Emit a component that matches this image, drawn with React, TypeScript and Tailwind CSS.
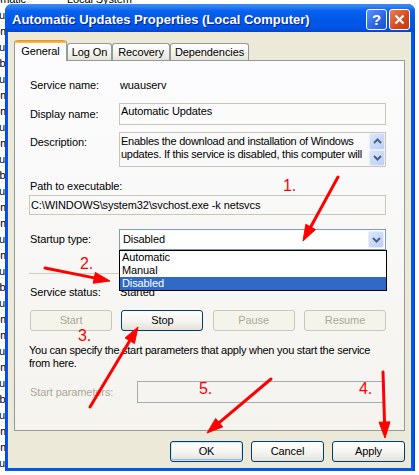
import React from 'react';

// XP "Automatic Updates Properties" dialog, with red annotation arrows drawn over it.

const arrows: [number, number, number, number][] = [
  [338, 177, 303, 241],
  [45, 268, 110, 281],
  [90, 407, 138, 327],
  [383, 372, 385, 438],
  [271, 379, 207, 433],
];

const marks = [
  { t: '1.', x: 283, y: 191 },
  { t: '2.', x: 80, y: 269 },
  { t: '3.', x: 78, y: 341 },
  { t: '4.', x: 359, y: 394 },
  { t: '5.', x: 199, y: 394 },
];

function head(x1: number, y1: number, x2: number, y2: number) {
  const d = Math.hypot(x2 - x1, y2 - y1);
  const ux = (x2 - x1) / d;
  const uy = (y2 - y1) / d;
  const bx = x2 - ux * 16;
  const by = y2 - uy * 16;
  return {
    bx,
    by,
    pts: `${x2},${y2} ${bx - uy * 5.5},${by + ux * 5.5} ${bx + uy * 5.5},${by - ux * 5.5}`,
  };
}

function Chevron({ up = false }: { up?: boolean }) {
  return (
    <svg width="9" height="6" viewBox="0 0 9 6">
      <path
        d={up ? 'M1 5 L4.5 1.5 L8 5' : 'M1 1 L4.5 4.5 L8 1'}
        fill="none"
        stroke="#4D6185"
        strokeWidth="2"
      />
    </svg>
  );
}

function Btn({
  children,
  disabled = false,
  def = false,
  className = '',
}: {
  children: React.ReactNode;
  disabled?: boolean;
  def?: boolean;
  className?: string;
}) {
  const base = 'h-[21px] rounded-[3px] border flex items-center justify-center text-[11px]';
  const look = disabled
    ? 'border-[#C9C7BA] bg-[#F5F4EA] text-[#ACA899]'
    : 'border-[#003C74] bg-[linear-gradient(#ffffff,#f4f4f0_55%,#e3e0d6)] text-black';
  const ring = def ? 'shadow-[inset_0_0_0_1px_#CEE7FF,inset_0_-1px_0_1px_#94B6E8]' : '';
  return <div className={`${base} ${look} ${ring} ${className}`}>{children}</div>;
}

const bgLeft = ['Automatic', 'Manual', 'Automatic', 'Manual', 'Disabled', 'Manual', 'Automatic'];

export default function App() {
  return (
    <div className="relative w-[419px] h-[475px] overflow-hidden bg-white font-['Liberation_Sans',Arial,sans-serif] text-[11px] tracking-[-0.1px] text-black">
      {/* services list behind the dialog */}
      <div className="flex flex-col mt-[-9px]">
        {Array.from({ length: 31 }, (_, i) => (
          <div key={i} className="h-[16px] flex items-center whitespace-nowrap">
            <span className="w-[89px] ml-[-22px] shrink-0">{bgLeft[i % bgLeft.length]}</span>
            <span>Local System</span>
          </div>
        ))}
      </div>

      {/* dialog window */}
      <div className="absolute left-[5px] top-[4px] w-[410px] h-[467px] rounded-t-[7px] bg-[linear-gradient(90deg,#0046D5,#0058EE_2px,#0058EE_calc(100%-2px),#0040C0)] flex flex-col overflow-hidden">
        <div className="h-[28px] shrink-0 flex items-center pl-[7px] pr-[5px] bg-[linear-gradient(#3A8CF6_0%,#2E7EF4_10%,#0762EE_25%,#0058E8_55%,#0055E5_85%,#0047D0_100%)]">
          <span className="pt-[3px] text-[13px] font-bold tracking-normal text-white [text-shadow:1px_1px_#0A1E8C] whitespace-nowrap">
            Automatic Updates Properties (Local Computer)
          </span>
          <div className="ml-auto flex gap-[2px] pt-[3px]">
            <div className="w-[21px] h-[21px] rounded-[3px] border border-white bg-[linear-gradient(135deg,#5C94F8,#2A63E6_60%,#1B4FCF)] flex items-center justify-center text-white font-bold text-[15px] leading-none">
              ?
            </div>
            <div className="w-[21px] h-[21px] rounded-[3px] border border-white bg-[linear-gradient(135deg,#E8805A,#D7471C_60%,#C13A12)] flex items-center justify-center">
              <svg width="11" height="11" viewBox="0 0 11 11">
                <path d="M1.5 1.5 L9.5 9.5 M9.5 1.5 L1.5 9.5" stroke="#fff" strokeWidth="2.2" />
              </svg>
            </div>
          </div>
        </div>

        <div className="flex-1 ml-[3px] mr-[4px] mb-[3px] bg-[#ECE9D8] flex flex-col pl-[6px] pr-[6px] pt-[8px]">
          {/* tabs */}
          <div className="h-[20px] flex items-end">
            <div className="relative z-10 w-[53px] h-[21px] mb-[-1px] border-x border-[#919B9C] rounded-t-[3px] bg-[#FCFCFE] flex flex-col">
              <div className="h-[3px] rounded-t-[3px] bg-[linear-gradient(#E68B2C,#FFC73C)]" />
              <div className="flex-1 flex items-center justify-center pb-[2px]">General</div>
            </div>
            {[
              ['Log On', 'w-[45px]'],
              ['Recovery', 'w-[58px]'],
              ['Dependencies', 'w-[79px]'],
            ].map(([t, w]) => (
              <div
                key={t}
                className={`${w} h-[17px] border-x border-t border-[#919B9C] rounded-t-[3px] bg-[linear-gradient(#ffffff,#F3F2EC_60%,#E5E3D8)] flex items-center justify-center`}
              >
                {t}
              </div>
            ))}
          </div>

          {/* tab page */}
          <div className="h-[371px] border border-[#919B9C] bg-[linear-gradient(#FCFCFE,#F4F3EE)] pl-[14px] pr-[18px] flex flex-col leading-[13px]">
            <div className="mt-[18px] h-[13px] flex">
              <span className="w-[90px] shrink-0 pl-px">Service name:</span>
              <span className="pl-px">wuauserv</span>
            </div>

            <div className="mt-[11px] h-[22px] flex items-center">
              <span className="w-[90px] shrink-0 pl-px">Display name:</span>
              <div className="flex-1 min-w-0 h-full border border-[#C9C7BA] pl-px pt-px">Automatic Updates</div>
            </div>

            <div className="mt-[7px] h-[35px] flex">
              <span className="w-[90px] shrink-0 pl-px pt-[4px]">Description:</span>
              <div className="flex-1 min-w-0 h-full border border-[#C9C7BA] flex">
                <div className="flex-1 min-w-0 pl-px pt-[2px] tracking-[-0.25px] whitespace-nowrap overflow-hidden">
                  Enables the download and installation of Windows
                  <br />
                  updates. If this service is disabled, this computer will
                </div>
                <div className="w-[16px] shrink-0 flex flex-col">
                  {[true, false].map((u) => (
                    <div
                      key={String(u)}
                      className="flex-1 rounded-[2px] border border-[#E6EEFC] bg-[linear-gradient(135deg,#DCE6FD,#BCCEF7)] flex items-center justify-center"
                    >
                      <Chevron up={u} />
                    </div>
                  ))}
                </div>
              </div>
            </div>

            <div className="mt-[13px] h-[13px] pl-px">Path to executable:</div>
            <div className="mt-[2px] h-[20px] border border-[#C9C7BA] flex items-center pl-px">
              C:\WINDOWS\system32\svchost.exe -k netsvcs
            </div>

            <div className="mt-[14px] h-[21px] flex items-center">
              <span className="w-[90px] shrink-0 pl-px">Startup type:</span>
              <div className="relative flex-1 min-w-0 h-full border border-[#7F9DB9] bg-white flex items-center pl-[3px]">
                Disabled
                <div className="absolute right-px top-px bottom-px w-[16px] rounded-[2px] border border-[#E6EEFC] bg-[linear-gradient(135deg,#DCE6FD,#BCCEF7)] flex items-center justify-center">
                  <Chevron />
                </div>
                <div className="absolute z-20 left-[-1px] right-[-2px] top-[20px] h-[41px] border border-black bg-white flex flex-col">
                  <div className="h-[13px] pl-[2px]">Automatic</div>
                  <div className="h-[13px] pl-[2px]">Manual</div>
                  <div className="h-[13px] pl-[2px] bg-[#316AC5] text-white">Disabled</div>
                </div>
              </div>
            </div>

            <div className="mt-[23px] h-px bg-[#D0D0BF]" />

            <div className="mt-[12px] h-[13px] flex">
              <span className="w-[90px] shrink-0 pl-px">Service status:</span>
              <span className="pl-px">Started</span>
            </div>

            <div className="mt-[11px] flex justify-between pl-px">
              <Btn disabled className="w-[82px]">Start</Btn>
              <Btn className="w-[82px]">Stop</Btn>
              <Btn disabled className="w-[82px]">Pause</Btn>
              <Btn disabled className="w-[82px]">Resume</Btn>
            </div>

            <p className="mt-[13px] whitespace-nowrap tracking-[-0.25px]">
              You can specify the start parameters that apply when you start the service
              <br />
              from here.
            </p>

            <div className="mt-[11px] h-[22px] flex items-center">
              <span className="w-[108px] shrink-0 pl-px text-[#ACA899]">Start parameters:</span>
              <div className="flex-1 h-full mr-px border border-[#A5ACB5]" />
            </div>
          </div>

          <div className="mt-[10px] flex justify-end gap-[8px]">
            <Btn def className="w-[73px]">OK</Btn>
            <Btn className="w-[73px]">Cancel</Btn>
            <Btn className="w-[73px]">Apply</Btn>
          </div>
        </div>
      </div>

      {/* red annotations */}
      <svg className="absolute inset-0 z-30 pointer-events-none" width="419" height="475" viewBox="0 0 419 475">
        {arrows.map(([x1, y1, x2, y2], i) => {
          const h = head(x1, y1, x2, y2);
          return (
            <g key={i} fill="#FF0000" stroke="#FF0000">
              <line x1={x1} y1={y1} x2={h.bx} y2={h.by} strokeWidth="3" strokeLinecap="round" />
              <polygon points={h.pts} strokeWidth="1" />
            </g>
          );
        })}
        {marks.map((m) => (
          <text key={m.t} x={m.x} y={m.y} fill="#FF0000" fontSize="16" fontFamily="Liberation Sans, Arial, sans-serif">
            {m.t}
          </text>
        ))}
      </svg>
    </div>
  );
}
